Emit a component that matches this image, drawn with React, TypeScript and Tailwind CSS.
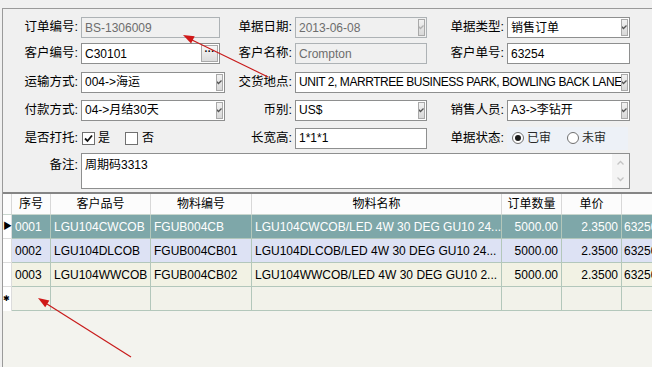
import type { ReactNode } from 'react';

function Label({ w, children, className = '' }: { w: string; children: ReactNode; className?: string }) {
  return <div className={`${w} shrink-0 text-right pr-[3px] text-[12.5px] ${className}`}>{children}</div>;
}

function Chevron({ color = '#555' }: { color?: string }) {
  return (
    <svg width="7" height="5" viewBox="0 0 7 5">
      <path d="M0.5 0.5 L3.5 3.5 L6.5 0.5" fill="none" stroke={color} strokeWidth="1.3" />
    </svg>
  );
}

function Field({
  w,
  children,
  disabled,
  combo,
  button,
  tight,
}: {
  w: string;
  children?: ReactNode;
  disabled?: boolean;
  combo?: boolean;
  button?: boolean;
  tight?: boolean;
}) {
  return (
    <div
      className={`${w} h-[21px] shrink-0 flex items-stretch border ${
        disabled ? 'border-[#adb2b5] bg-[#f0f0f0] text-[#6d6d6d]' : 'border-[#8e8f8f] bg-white text-black'
      }`}
    >
      <div
        className={`flex-1 flex items-center pl-[3px] overflow-hidden whitespace-nowrap ${tight ? 'tracking-[-0.45px]' : ''}`}
      >
        {children}
      </div>
      {combo && (
        <div className="w-[7px] mr-px my-px border border-[#a9a9a9] bg-gradient-to-b from-[#f2f2f2] to-[#d8d8d8] flex items-center justify-start overflow-hidden">
          <div className="-ml-[2px]">
            <Chevron color={disabled ? '#b0b0b0' : '#555'} />
          </div>
        </div>
      )}
      {button && (
        <div className="w-[17px] my-px mr-px border border-[#a9a9a9] bg-gradient-to-b from-[#f7f7f7] to-[#dcdcdc] flex items-center justify-center text-[10px] leading-none pb-[3px] font-bold">
          ···
        </div>
      )}
    </div>
  );
}

function Checkbox({ checked }: { checked?: boolean }) {
  return (
    <div className="w-[13px] h-[13px] border border-[#707070] bg-white flex items-center justify-center">
      {checked && (
        <svg width="9" height="9" viewBox="0 0 9 9">
          <path d="M1 4.5 L3.5 7 L8 1.5" fill="none" stroke="#111" strokeWidth="1.8" />
        </svg>
      )}
    </div>
  );
}

function Radio({ checked }: { checked?: boolean }) {
  return (
    <div className="w-[12px] h-[12px] rounded-full border border-[#6f6f6f] bg-white flex items-center justify-center">
      {checked && <div className="w-[6px] h-[6px] rounded-full bg-[#1a1a1a]" />}
    </div>
  );
}

const rows = [
  {
    no: '0001',
    cust: 'LGU104CWCOB',
    item: 'FGUB004CB',
    name: 'LGU104CWCOB/LED 4W 30 DEG GU10 24...',
    bg: 'bg-[#7ea7a9] text-white',
    mark: '▶',
  },
  {
    no: '0002',
    cust: 'LGU104DLCOB',
    item: 'FGUB004CB01',
    name: 'LGU104DLCOB/LED 4W 30 DEG GU10 24...',
    bg: 'bg-[#dde2f4] text-black',
    mark: '',
  },
  {
    no: '0003',
    cust: 'LGU104WWCOB',
    item: 'FGUB004CB02',
    name: 'LGU104WWCOB/LED 4W 30 DEG GU10 2...',
    bg: 'bg-[#f2f2e4] text-black',
    mark: '',
  },
];

function Arrows() {
  return (
    <svg className="absolute inset-0 pointer-events-none" width="652" height="367" viewBox="0 0 652 367">
      <line x1="268" y1="77" x2="192" y2="40" stroke="#c81a1a" strokeWidth="1.2" />
      <polygon points="183,35 194.7,36.3 191.1,43.5" fill="#d01818" />
      <line x1="131" y1="357" x2="47" y2="304" stroke="#c81a1a" strokeWidth="1.2" />
      <polygon points="38,298 49.4,300.5 45.2,307.3" fill="#d01818" />
    </svg>
  );
}

export default function App() {
  return (
    <div className="relative w-[652px] h-[367px] overflow-hidden bg-[#f0f0f0] text-[12px] leading-none text-black font-['Liberation_Sans','Noto_Sans_CJK_SC',sans-serif]">
      <div className="h-[8px]" />
      <div className="ml-[2px] h-[359px] border-t border-l border-[#9a9a9a] flex flex-col">
        {/* form */}
        <div className="pt-[8px] pb-[3px] flex flex-col">
          <div className="flex items-center h-[21px]">
            <Label w="w-[78px]">订单编号:</Label>
            <div className="w-[144px] shrink-0">
              <Field w="w-[139px]" disabled>BS-1306009</Field>
            </div>
            <Label w="w-[70px]">单据日期:</Label>
            <Field w="w-[132px]" disabled combo>2013-06-08</Field>
            <Label w="w-[80px]">单据类型:</Label>
            <Field w="w-[123px]" combo>销售订单</Field>
          </div>

          <div className="flex items-center h-[21px] mt-[5px]">
            <Label w="w-[78px]">客户编号:</Label>
            <div className="w-[144px] shrink-0">
              <Field w="w-[139px]" button>C30101</Field>
            </div>
            <Label w="w-[70px]">客户名称:</Label>
            <Field w="w-[132px]" disabled>Crompton</Field>
            <Label w="w-[80px]">客户单号:</Label>
            <Field w="w-[123px]">63254</Field>
          </div>

          <div className="flex items-center h-[22px] mt-[7px]">
            <Label w="w-[78px]">运输方式:</Label>
            <Field w="w-[144px]" combo>004-&gt;海运</Field>
            <Label w="w-[70px]">交货地点:</Label>
            <Field w="w-[335px]" combo tight>UNIT 2, MARRTREE BUSINESS PARK, BOWLING BACK LANE</Field>
          </div>

          <div className="flex items-center h-[22px] mt-[6px]">
            <Label w="w-[78px]">付款方式:</Label>
            <Field w="w-[144px]" combo>04-&gt;月结30天</Field>
            <Label w="w-[70px]">币别:</Label>
            <Field w="w-[132px]" combo>US$</Field>
            <Label w="w-[80px]">销售人员:</Label>
            <Field w="w-[123px]" combo>A3-&gt;李钻开</Field>
          </div>

          <div className="flex items-center h-[22px] mt-[6px]">
            <Label w="w-[78px]">是否打托:</Label>
            <div className="w-[144px] shrink-0 flex items-center">
              <div className="ml-px">
                <Checkbox checked />
              </div>
              <span className="ml-[3px]">是</span>
              <div className="ml-[15px]">
                <Checkbox />
              </div>
              <span className="ml-[4px]">否</span>
            </div>
            <Label w="w-[70px]">长宽高:</Label>
            <Field w="w-[132px]">1*1*1</Field>
            <Label w="w-[80px]">单据状态:</Label>
            <div className="w-[121px] h-[23px] bg-[#edf1f7] flex items-center pl-[5px] text-[#2a2a2a]">
              <Radio checked />
              <span className="ml-[3px]">已审</span>
              <div className="ml-[16px]">
                <Radio />
              </div>
              <span className="ml-[3px]">未审</span>
            </div>
          </div>

          <div className="flex items-start h-[36px] mt-[4px]">
            <Label w="w-[78px]" className="pt-[6px]">备注:</Label>
            <div className="w-[549px] h-[36px] border border-[#8e8f8f] bg-white flex">
              <div className="flex-1 pl-[3px] pt-[5px]">周期码3313</div>
              <div className="w-[17px] bg-[#f4f4f4] flex flex-col items-center justify-between py-[6px]">
                <div className="rotate-180">
                  <Chevron color="#c4c4c4" />
                </div>
                <Chevron color="#c4c4c4" />
              </div>
            </div>
          </div>
        </div>

        {/* grid */}
        <div className="flex-1 bg-[#f3f3ee] border-t-2 border-[#858585]">
          <div className="flex h-[21px] bg-[#fcfcfc] border-b border-[#c9d6ce]">
            <div className="w-[9px] shrink-0 border-r border-[#d8d8d8]" />
            <div className="w-[39px] shrink-0 border-r border-[#d8d8d8] flex items-center justify-center">序号</div>
            <div className="w-[100px] shrink-0 border-r border-[#d8d8d8] flex items-center justify-center">客户品号</div>
            <div className="w-[101px] shrink-0 border-r border-[#d8d8d8] flex items-center justify-center">物料编号</div>
            <div className="w-[250px] shrink-0 border-r border-[#d8d8d8] flex items-center justify-center">物料名称</div>
            <div className="w-[60px] shrink-0 border-r border-[#d8d8d8] flex items-center justify-center">订单数量</div>
            <div className="w-[60px] shrink-0 border-r border-[#d8d8d8] flex items-center justify-center">单价</div>
            <div className="w-[100px] shrink-0" />
          </div>
          {rows.map((r) => (
            <div key={r.no} className="flex h-[24px]">
              <div className="w-[9px] shrink-0 bg-white border-r border-b border-[#dcdcdc] flex items-center text-[9px] text-black">
                {r.mark}
              </div>
              <div className={`flex flex-1 ${r.bg} border-b border-[#b3c7bb] whitespace-nowrap`}>
                <div className="w-[39px] shrink-0 border-r border-[#b3c7bb] flex items-center pl-[3px]">{r.no}</div>
                <div className="w-[100px] shrink-0 border-r border-[#b3c7bb] flex items-center pl-[3px]">{r.cust}</div>
                <div className="w-[101px] shrink-0 border-r border-[#b3c7bb] flex items-center pl-[3px]">{r.item}</div>
                <div className="w-[250px] shrink-0 border-r border-[#b3c7bb] flex items-center pl-[3px] overflow-hidden">{r.name}</div>
                <div className="w-[60px] shrink-0 border-r border-[#b3c7bb] flex items-center justify-end pr-[3px]">5000.00</div>
                <div className="w-[60px] shrink-0 border-r border-[#b3c7bb] flex items-center justify-end pr-[3px]">2.3500</div>
                <div className="w-[100px] shrink-0 flex items-center pl-[2px]">632500.00</div>
              </div>
            </div>
          ))}
          <div className="flex h-[24px]">
            <div className="w-[9px] shrink-0 bg-white border-r border-[#dcdcdc] flex items-center text-[8px] text-black">✱</div>
            <div className="flex flex-1 bg-[#f2f2ea] border-b border-[#b3c7bb]">
              <div className="w-[39px] shrink-0 border-r border-[#b3c7bb]" />
              <div className="w-[100px] shrink-0 border-r border-[#b3c7bb]" />
              <div className="w-[101px] shrink-0 border-r border-[#b3c7bb]" />
              <div className="w-[250px] shrink-0 border-r border-[#b3c7bb]" />
              <div className="w-[60px] shrink-0 border-r border-[#b3c7bb]" />
              <div className="w-[60px] shrink-0 border-r border-[#b3c7bb]" />
              <div className="w-[100px] shrink-0" />
            </div>
          </div>
        </div>
      </div>
      <Arrows />
    </div>
  );
}
